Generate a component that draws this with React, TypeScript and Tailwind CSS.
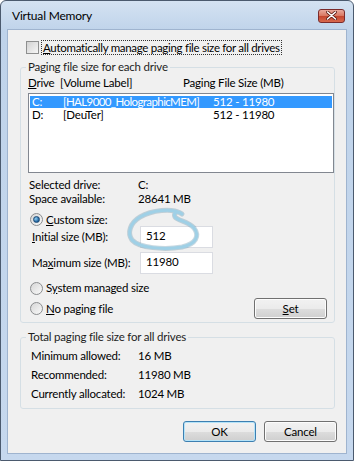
function Radio({ checked = false }: { checked?: boolean }) {
  return (
    <span className="flex h-[13px] w-[13px] shrink-0 items-center justify-center rounded-full border border-[#8b8d8f] bg-gradient-to-br from-[#d6d6d6] to-[#fafafa]">
      {checked && (
        <span className="h-[7px] w-[7px] rounded-full border border-[#1c4a75] bg-[radial-gradient(circle_at_35%_35%,#8fd0f5,#1d5f9a_70%)]" />
      )}
    </span>
  );
}

function Button({ label, def = false, className = "" }: { label: React.ReactNode; def?: boolean; className?: string }) {
  return (
    <div
      className={`flex h-[21px] w-[73px] items-center justify-center rounded-[3px] border ${
        def ? "border-[#3c7fb1] shadow-[inset_0_0_0_1px_#b5e3f8]" : "border-[#707070] shadow-[inset_0_0_0_1px_#fcfcfc]"
      } bg-[linear-gradient(#f2f2f2_0%,#ebebeb_50%,#dddddd_51%,#cfcfcf_100%)] ${className}`}
    >
      {label}
    </div>
  );
}

export default function App() {
  return (
    <div className="h-[461px] w-[354px] overflow-hidden rounded-t-[6px] border border-[#4b5a6e] bg-[linear-gradient(180deg,#d4e2f2_0px,#bfd3ea_30px,#c6d8ee_100%)] px-[6px] pb-[6px] font-['Lato',sans-serif] text-[11.5px] leading-[14px] tracking-[-0.2px] text-black">
      {/* Title bar */}
      <div className="flex h-[28px] items-center">
        <span className="ml-[5px] mt-[2px] text-[12px]">Virtual Memory</span>
        <div className="ml-auto mr-[2px] mt-[1px] flex h-[14px] w-[27px] items-center justify-center rounded-[3px] border border-[#7a2b2b] bg-[linear-gradient(#e9a99c_0%,#d9765f_50%,#c4452d_51%,#d8694e_100%)]">
          <svg width="11" height="9" viewBox="0 0 11 9">
            <path d="M1.5 1 L9.5 8 M9.5 1 L1.5 8" stroke="#5a1a12" strokeWidth="3" strokeLinecap="round" />
            <path d="M1.5 1 L9.5 8 M9.5 1 L1.5 8" stroke="#ffffff" strokeWidth="1.6" strokeLinecap="round" />
          </svg>
        </div>
      </div>

      {/* Client area */}
      <div className="relative flex h-[425px] flex-col border border-[#9fb4cf] bg-[#f0f0f0]">
        <div className="ml-[18px] mt-[10px] flex h-[14px] items-center">
          <span className="h-[13px] w-[13px] border border-[#8e8f8f] bg-gradient-to-br from-[#d2d2d2] to-[#f6f6f6]" />
          <span className="ml-[2px] border border-dotted border-[#333] px-[1px] leading-[13px] tracking-[-0.3px]">
            <span className="underline">A</span>utomatically manage paging file size for all drives
          </span>
        </div>

        <fieldset className="ml-[12px] mt-[6px] w-[315px] rounded-[3px] border border-[#d5dfe5] pb-[3px]">
          <legend className="ml-[5px] px-[2px] text-[#1e1e1e]">Paging file size for each drive</legend>
          <div className="mt-[2px] flex pl-[7px]">
            <span className="w-[32px]"><span className="underline">D</span>rive</span>
            <span className="w-[123px]">[Volume Label]</span>
            <span>Paging File Size (MB)</span>
          </div>
          <div className="ml-[7px] mt-[3px] h-[80px] w-[306px] border border-[#828790] bg-white px-[1px] pt-[2px] leading-[12px]">
            <div className="flex h-[12px] bg-[#3399ff] pl-[2px] text-white">
              <span className="w-[31px]">C:</span>
              <span className="w-[150px] whitespace-nowrap tracking-[-0.6px]">[HAL9000_HolographicMEM]</span>
              <span>512 - 11980</span>
            </div>
            <div className="mt-[1px] flex h-[12px] pl-[2px]">
              <span className="w-[31px]">D:</span>
              <span className="w-[150px]">[DeuTer]</span>
              <span>512 - 11980</span>
            </div>
          </div>

          <div className="mt-[5px] flex pl-[8px]">
            <span className="w-[109px]">Selected drive:</span>
            <span>C:</span>
          </div>
          <div className="flex pl-[8px]">
            <span className="w-[109px]">Space available:</span>
            <span>28641 MB</span>
          </div>

          <div className="mt-[7px] flex h-[13px] items-center pl-[9px]">
            <Radio checked />
            <span className="ml-[3px]"><span className="underline">C</span>ustom size:</span>
          </div>
          <div className="flex items-center pl-[11px]">
            <span className="w-[108px]"><span className="underline">I</span>nitial size (MB):</span>
            <div className="flex h-[22px] w-[73px] items-center border border-[#dadce2] bg-white pb-[2px] pl-[5px]">512</div>
          </div>
          <div className="mt-[4px] flex items-center pl-[11px]">
            <span className="w-[108px]">Ma<span className="underline">x</span>imum size (MB):</span>
            <div className="flex h-[22px] w-[73px] items-center border border-[#dadce2] bg-white pb-[2px] pl-[5px]">11980</div>
          </div>

          <div className="mt-[7px] flex items-center pl-[9px]">
            <Radio />
            <span className="ml-[3px]">S<span className="underline">y</span>stem managed size</span>
          </div>
          <div className="mt-[3px] flex items-center pl-[9px] pr-[7px]">
            <Radio />
            <span className="ml-[3px]"><span className="underline">N</span>o paging file</span>
            <Button className="ml-auto" label={<><span className="underline">S</span>et</>} />
          </div>
        </fieldset>

        <fieldset className="ml-[12px] mt-[7px] w-[315px] rounded-[3px] border border-[#d5dfe5] pb-[7px]">
          <legend className="ml-[5px] px-[2px] text-[#1e1e1e]">Total paging file size for all drives</legend>
          <div className="mt-[5px] flex flex-col gap-[5px] pl-[10px]">
            <div className="flex">
              <span className="w-[107px]">Minimum allowed:</span>
              <span>16 MB</span>
            </div>
            <div className="flex">
              <span className="w-[107px]">Recommended:</span>
              <span>11980 MB</span>
            </div>
            <div className="flex">
              <span className="w-[107px]">Currently allocated:</span>
              <span>1024 MB</span>
            </div>
          </div>
        </fieldset>

        <div className="mr-[9px] mt-[12px] flex justify-end gap-[8px]">
          <Button def label="OK" />
          <Button label="Cancel" />
        </div>

        {/* hand-drawn highlight around the initial size */}
        <svg className="pointer-events-none absolute left-[114px] top-[176px]" width="90" height="50" viewBox="0 0 90 50">
          <path
            d="M58 7 C50 2 30 4 18 11 C8 17 5 27 10 34 C17 42 42 44 60 41 C74 38 78 30 72 22 C66 15 56 15 53 11 C51 7 55 4 60 8"
            fill="none"
            stroke="#5f8fa8"
            strokeOpacity="0.35"
            strokeWidth="5"
            strokeLinecap="round"
          />
          <path
            d="M58 7 C50 2 30 4 18 11 C8 17 5 27 10 34 C17 42 42 44 60 41 C74 38 78 30 72 22 C66 15 56 15 53 11 C51 7 55 4 60 8"
            fill="none"
            stroke="#9fd0e6"
            strokeWidth="3"
            strokeLinecap="round"
          />
        </svg>
      </div>
    </div>
  );
}
